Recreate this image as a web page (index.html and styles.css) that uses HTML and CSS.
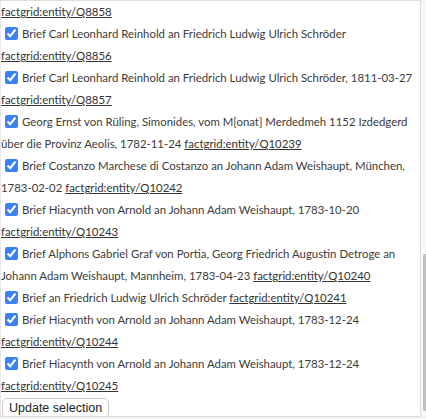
FILE: index.html
```html
<!DOCTYPE html>
<html lang="de">
<head>
  <meta charset="UTF-8" />
  <title>Auswahl</title>
  <link rel="stylesheet" href="styles.css">
</head>
<body>

<div class="frame">
  <div class="list-box">
    <div class="item">
      <a href="#">factgrid:entity/Q8858</a>
    </div>
    <div class="item">
      <label><input type="checkbox" checked> Brief Carl Leonhard Reinhold an Friedrich Ludwig Ulrich Schröder</label>
      <a href="#">factgrid:entity/Q8856</a>
    </div>
    <div class="item">
      <label><input type="checkbox" checked> Brief Carl Leonhard Reinhold an Friedrich Ludwig Ulrich Schröder, 1811-03-27</label>
      <a href="#">factgrid:entity/Q8857</a>
    </div>
    <div class="item">
      <label><input type="checkbox" checked> Georg Ernst von Rüling, Simonides, vom M[onat] Merdedmeh 1152 Izdedgerd über die Provinz Aeolis, 1782-11-24</label>
      <a href="#">factgrid:entity/Q10239</a>
    </div>
    <div class="item">
      <label><input type="checkbox" checked> Brief Costanzo Marchese di Costanzo an Johann Adam Weishaupt, München, 1783-02-02</label>
      <a href="#">factgrid:entity/Q10242</a>
    </div>
    <div class="item">
      <label><input type="checkbox" checked> Brief Hiacynth von Arnold an Johann Adam Weishaupt, 1783-10-20</label>
      <a href="#">factgrid:entity/Q10243</a>
    </div>
    <div class="item">
      <label><input type="checkbox" checked> Brief Alphons Gabriel Graf von Portia, Georg Friedrich Augustin Detroge an Johann Adam Weishaupt, Mannheim, 1783-04-23</label>
      <a href="#">factgrid:entity/Q10240</a>
    </div>
    <div class="item">
      <label><input type="checkbox" checked> Brief an Friedrich Ludwig Ulrich Schröder</label>
      <a href="#">factgrid:entity/Q10241</a>
    </div>
    <div class="item">
      <label><input type="checkbox" checked> Brief Hiacynth von Arnold an Johann Adam Weishaupt, 1783-12-24</label>
      <a href="#">factgrid:entity/Q10244</a>
    </div>
    <div class="item">
      <label><input type="checkbox" checked> Brief Hiacynth von Arnold an Johann Adam Weishaupt, 1783-12-24</label>
      <a href="#">factgrid:entity/Q10245</a>
    </div>
    <button class="update-btn" type="button">Update selection</button>
  </div>
  <div class="scrollbar">
    <div class="scroll-thumb"></div>
  </div>
</div>

</body>
</html>
```

FILE: styles.css
```css
* {
  box-sizing: border-box;
}
body {
  margin: 0;
  background: #f3f3f3;
  font-family: Lato, 'Open Sans', sans-serif;
  color: #3c3c3c;
}

.frame {
  display: flex;
  height: 417px;
}

.list-box {
  width: 421px;
  height: 417px;
  overflow: hidden;
  background: #fff;
  border: 1px solid #dedede;
  border-left-color: #e8e8e8;
  padding: 0 4px 0 0;
  font-size: 11.4px;
  line-height: 22px;
}

.item {
  margin: 0;
}
.item label {
  cursor: pointer;
}
.item input {
  accent-color: #3b82f6;
  width: 13px;
  height: 13px;
  margin: 0 1px 0 4px;
  vertical-align: -2px;
}
.item a {
  color: #333;
  text-decoration: underline;
}

.update-btn {
  font-family: 'Liberation Sans', Arial, sans-serif;
  font-size: 12.5px;
  color: #222;
  background: #fff;
  border: 1px solid #c8c8c8;
  border-radius: 5px;
  padding: 1px 6px;
  margin: -1px 0 0 1px;
  line-height: 16px;
}

.scrollbar {
  width: 5px;
  height: 417px;
  background: #f7f7f7;
  display: flex;
  flex-direction: column;
  justify-content: flex-end;
  padding-left: 2px;
}
.scroll-thumb {
  height: 157px;
  margin-bottom: 6px;
  background: #c2c2c2;
  border-radius: 2px 0 0 2px;
}
```
